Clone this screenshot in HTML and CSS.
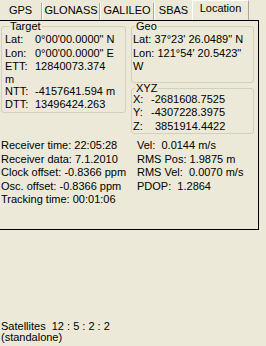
FILE: index.html
```html
<!DOCTYPE html>
<html lang="en">
<head>
    <meta charset="UTF-8">
    <meta name="viewport" content="width=device-width, initial-scale=1.0">
    <title>Location</title>
    <link rel="stylesheet" href="styles.css">
</head>
<body>
<div class="tabs">
    <div class="tab tab-gps">GPS</div>
    <div class="tab tab-glonass">GLONASS</div>
    <div class="tab tab-galileo">GALILEO</div>
    <div class="tab tab-sbas">SBAS</div>
    <div class="tab tab-location active">Location</div>
</div>

<div class="panel">
    <div class="top">
        <!-- Target -->
        <fieldset class="group target">
            <legend>Target</legend>
            <div class="pair"><span class="key">Lat:</span>0°00'00.0000" N</div>
            <div class="pair"><span class="key">Lon:</span>0°00'00.0000" E</div>
            <div class="stack">
                <div><span class="key">ETT:</span>12840073.374</div>
                <div>m</div>
                <div><span class="key">NTT:</span>-4157641.594 m</div>
                <div><span class="key">DTT:</span>13496424.263</div>
            </div>
        </fieldset>

        <div class="side">
            <!-- Geo -->
            <fieldset class="group geo">
                <legend>Geo</legend>
                <div class="pair">Lat: 37°23' 26.0489" N</div>
                <div class="pair">Lon: 121°54' 20.5423"</div>
                <div class="wrap">W</div>
            </fieldset>

            <!-- XYZ -->
            <fieldset class="group xyz">
                <legend>XYZ</legend>
                <div class="coord"><span class="axis">X:</span>-2681608.7525</div>
                <div class="coord"><span class="axis">Y:</span>-4307228.3975</div>
                <div class="coord"><span class="axis">Z:</span><span class="pos">3851914.4422</span></div>
            </fieldset>
        </div>
    </div>

    <div class="info">
        <div class="info-col left">
            <div>Receiver time: 22:05:28</div>
            <div>Receiver data: 7.1.2010</div>
            <div>Clock offset: -0.8366 ppm</div>
            <div>Osc. offset: -0.8366 ppm</div>
            <div>Tracking time: 00:01:06</div>
        </div>
        <div class="info-col right">
            <div>Vel:  0.0144 m/s</div>
            <div>RMS Pos: 1.9875 m</div>
            <div>RMS Vel:  0.0070 m/s</div>
            <div>PDOP:  1.2864</div>
        </div>
    </div>
</div>

<div class="status">
    <div>Satellites  12 : 5 : 2 : 2</div>
    <div>(standalone)</div>
</div>
</body>
</html>
```

FILE: styles.css
```css
* {
    box-sizing: border-box;
}

body {
    font-family: "Liberation Sans", Arial, sans-serif;
    font-size: 11px;
    background-color: #ece9d8;
    color: #000;
    margin: 0;
    width: 266px;
    height: 346px;
    display: flex;
    flex-direction: column;
    overflow: hidden;
}

/* Tab strip */
.tabs {
    display: flex;
    align-items: flex-end;
    height: 20px;
}

.tab {
    height: 17px;
    line-height: 15px;
    text-align: center;
    white-space: nowrap;
    border-right: 1px solid #aca899;
}

.tab + .tab {
    border-left: 1px solid #fff;
}

.tab-gps { width: 42px; }
.tab-glonass { width: 58px; }
.tab-galileo { width: 54px; }
.tab-sbas { width: 38px; border-right: none; }

.tab-location {
    width: 57px;
}

.tab.active {
    height: 20px;
    border-top: 1px solid #fff;
    border-right: 1px solid #aca899;
}

/* Main panel */
.panel {
    width: 259px;
    height: 210px;
    flex-shrink: 0;
    border: 1px solid #000;
    border-left: none;
}

.top {
    display: flex;
    align-items: flex-start;
}

.group {
    margin: 0;
    min-width: 0;
    border: 1px solid #d0d0bf;
    border-radius: 3px;
    padding: 0 2px 2px 3px;
}

.group legend {
    line-height: 11px;
    padding: 0 1px;
    margin-left: 4px;
}

.target {
    width: 125px;
    margin-left: 1px;
}

.key {
    display: inline-block;
    width: 30px;
}

.pair {
    line-height: 14px;
    white-space: nowrap;
}

.stack {
    line-height: 12.5px;
    white-space: nowrap;
}

.side {
    width: 123px;
    margin-left: 5px;
}

.geo {
    padding: 0 0 8px 1px;
}

.geo legend {
    margin-left: 2px;
}

.wrap {
    line-height: 13.5px;
}

.xyz {
    margin-top: 1px;
    padding: 0 0 0 1px;
}

.xyz legend {
    margin-left: 2px;
    line-height: 9px;
}

.coord {
    line-height: 13.5px;
    white-space: nowrap;
}

.axis {
    display: inline-block;
    width: 18px;
}

.pos {
    padding-left: 4px;
}

/* Receiver info */
.info {
    display: flex;
    margin-top: 5px;
    line-height: 13.5px;
}

.info-col div {
    white-space: pre;
}

.info-col.left {
    width: 137px;
    padding-left: 1px;
}

/* Footer */
.status {
    margin-top: auto;
    padding: 0 0 3px 1px;
    line-height: 11px;
}

.status div {
    white-space: pre;
}
```
